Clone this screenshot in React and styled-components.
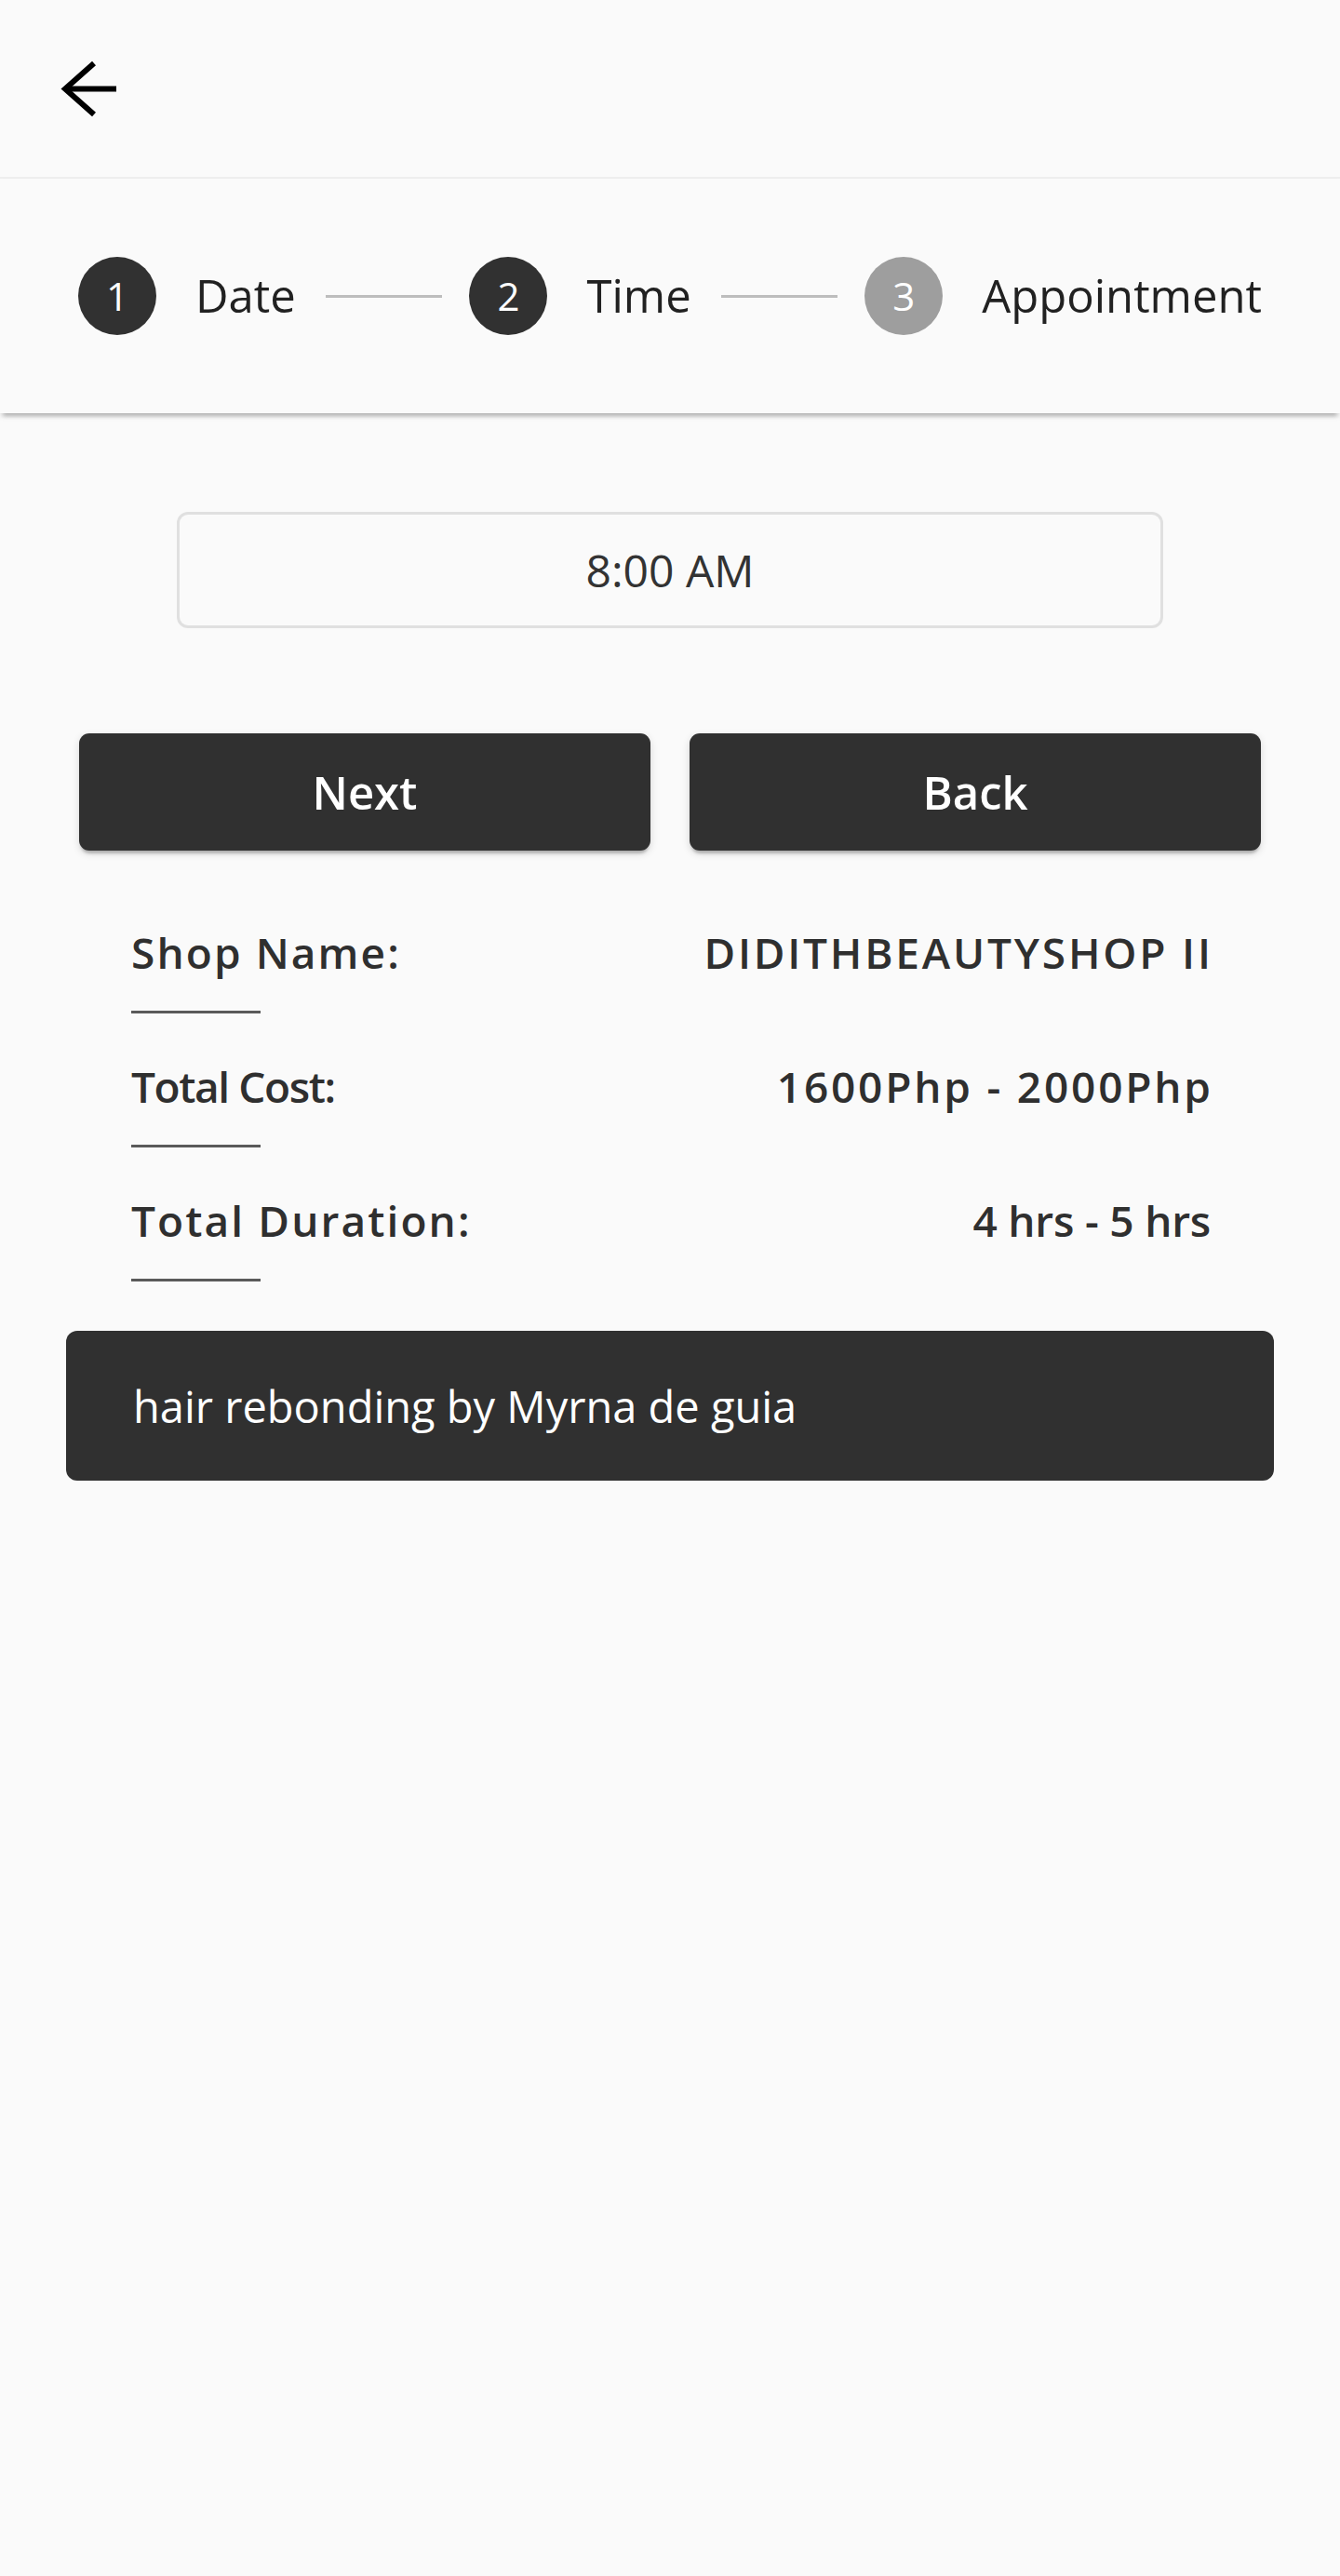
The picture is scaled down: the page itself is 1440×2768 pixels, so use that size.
import React from 'react'
import styled, { createGlobalStyle } from 'styled-components'

const steps = [
  { n: 1, label: 'Date', done: true },
  { n: 2, label: 'Time', done: true },
  { n: 3, label: 'Appointment', done: false }
]

const details = [
  { label: 'Shop Name:', value: 'DIDITHBEAUTYSHOP II', labelTracking: 2.1, valueTracking: 2.8 },
  { label: 'Total Cost:', value: '1600Php - 2000Php', labelTracking: -1.4, valueTracking: 2.8 },
  { label: 'Total Duration:', value: '4 hrs - 5 hrs', labelTracking: 2.1, valueTracking: -0.2 }
]

export default () => (
  <Page>
    <GlobalStyle />
    <Header>
      <BackButton aria-label="Back">
        <svg width="64" height="64" viewBox="0 0 64 64" fill="none" stroke="#000" strokeWidth="6">
          <polyline points="37,4 6,31.5 37,59" strokeLinejoin="miter" />
          <line x1="7" y1="31.5" x2="61" y2="31.5" />
        </svg>
      </BackButton>
    </Header>

    <Stepper>
      {steps.map((s, i) => (
        <React.Fragment key={s.n}>
          {i > 0 && <Connector />}
          <Step>
            <StepIcon done={s.done}>{s.n}</StepIcon>
            <StepLabel>{s.label}</StepLabel>
          </Step>
        </React.Fragment>
      ))}
    </Stepper>

    <Content>
      <TimeBox>8:00 AM</TimeBox>

      <ButtonRow>
        <DarkButton>Next</DarkButton>
        <DarkButton>Back</DarkButton>
      </ButtonRow>

      <InfoList>
        {details.map(d => (
          <InfoItem key={d.label}>
            <InfoRow>
              <InfoText tracking={d.labelTracking}>{d.label}</InfoText>
              <InfoText tracking={d.valueTracking} trailing>{d.value}</InfoText>
            </InfoRow>
            <Underline />
          </InfoItem>
        ))}
      </InfoList>

      <ServiceCard>hair rebonding by Myrna de guia</ServiceCard>
    </Content>
  </Page>
)

const GlobalStyle = createGlobalStyle`
  * { box-sizing: border-box; }
  body {
    margin: 0;
    background: #fafafa;
    font-family: "Open Sans", "Noto Sans", sans-serif;
  }
`
const Page = styled.div`
  min-height: 2768px;
  background: #fafafa;
  color: #212121;
`
const Header = styled.header`
  height: 192px;
  display: flex;
  align-items: center;
  padding-left: 64px;
  border-bottom: 2px solid #eeeeee;
`
const BackButton = styled.div`
  display: flex;
  width: 64px;
  height: 64px;
  margin-top: 2px;
`
const Stepper = styled.div`
  display: flex;
  align-items: center;
  padding: 84px 84px;
  background: #fafafa;
  box-shadow: 0 7px 4px -4px rgba(0, 0, 0, 0.2), 0 4px 5px 0 rgba(0, 0, 0, 0.1);
  position: relative;
`
const Step = styled.div`
  display: flex;
  align-items: center;
  gap: 42px;
`
const StepIcon = styled.div`
  width: 84px;
  height: 84px;
  border-radius: 50%;
  background: ${p => (p.done ? '#313131' : '#9e9e9e')};
  color: #fff;
  font-size: 42px;
  display: flex;
  align-items: center;
  justify-content: center;
  line-height: 1;
`
const StepLabel = styled.span`
  font-size: 49px;
  color: #212121;
  line-height: 1.3;
`
const Connector = styled.div`
  flex: 1;
  height: 3px;
  margin: 0 29px 0 32px;
  background: #bdbdbd;
`
const Content = styled.main`
  padding: 106px 85px 0;
`
const TimeBox = styled.div`
  width: 1060px;
  height: 125px;
  margin: 0 auto;
  border: 3px solid #e0e0e0;
  border-radius: 12px;
  display: flex;
  align-items: center;
  justify-content: center;
  font-size: 48px;
  color: #333;
`
const ButtonRow = styled.div`
  display: grid;
  grid-template-columns: 1fr 1fr;
  gap: 42px;
  margin-top: 113px;
`
const DarkButton = styled.button`
  height: 126px;
  border: none;
  border-radius: 11px;
  background: #303030;
  color: #fff;
  font-family: inherit;
  font-size: 49px;
  font-weight: 600;
  box-shadow: 0 5px 3px -2px rgba(0, 0, 0, 0.22), 0 3px 8px 0 rgba(0, 0, 0, 0.14);
`
const InfoList = styled.div`
  margin-top: 77px;
  padding: 0 54px 0 56px;
`
const InfoItem = styled.div`
  margin-bottom: 46px;
`
const InfoRow = styled.div`
  display: flex;
  justify-content: space-between;
  align-items: baseline;
`
const InfoText = styled.span`
  font-size: 46px;
  line-height: 64px;
  font-weight: 600;
  color: #2f2f2f;
  letter-spacing: ${p => p.tracking}px;
  margin-right: ${p => (p.trailing && p.tracking > 0 ? -p.tracking : 0)}px;
`
const Underline = styled.div`
  width: 139px;
  height: 3px;
  margin-top: 31px;
  background: #5a5a5a;
`
const ServiceCard = styled.div`
  margin: 53px -14px 0;
  height: 161px;
  padding: 0 72px;
  display: flex;
  align-items: center;
  border-radius: 12px;
  background: #303030;
  color: #fff;
  font-size: 47px;
`
